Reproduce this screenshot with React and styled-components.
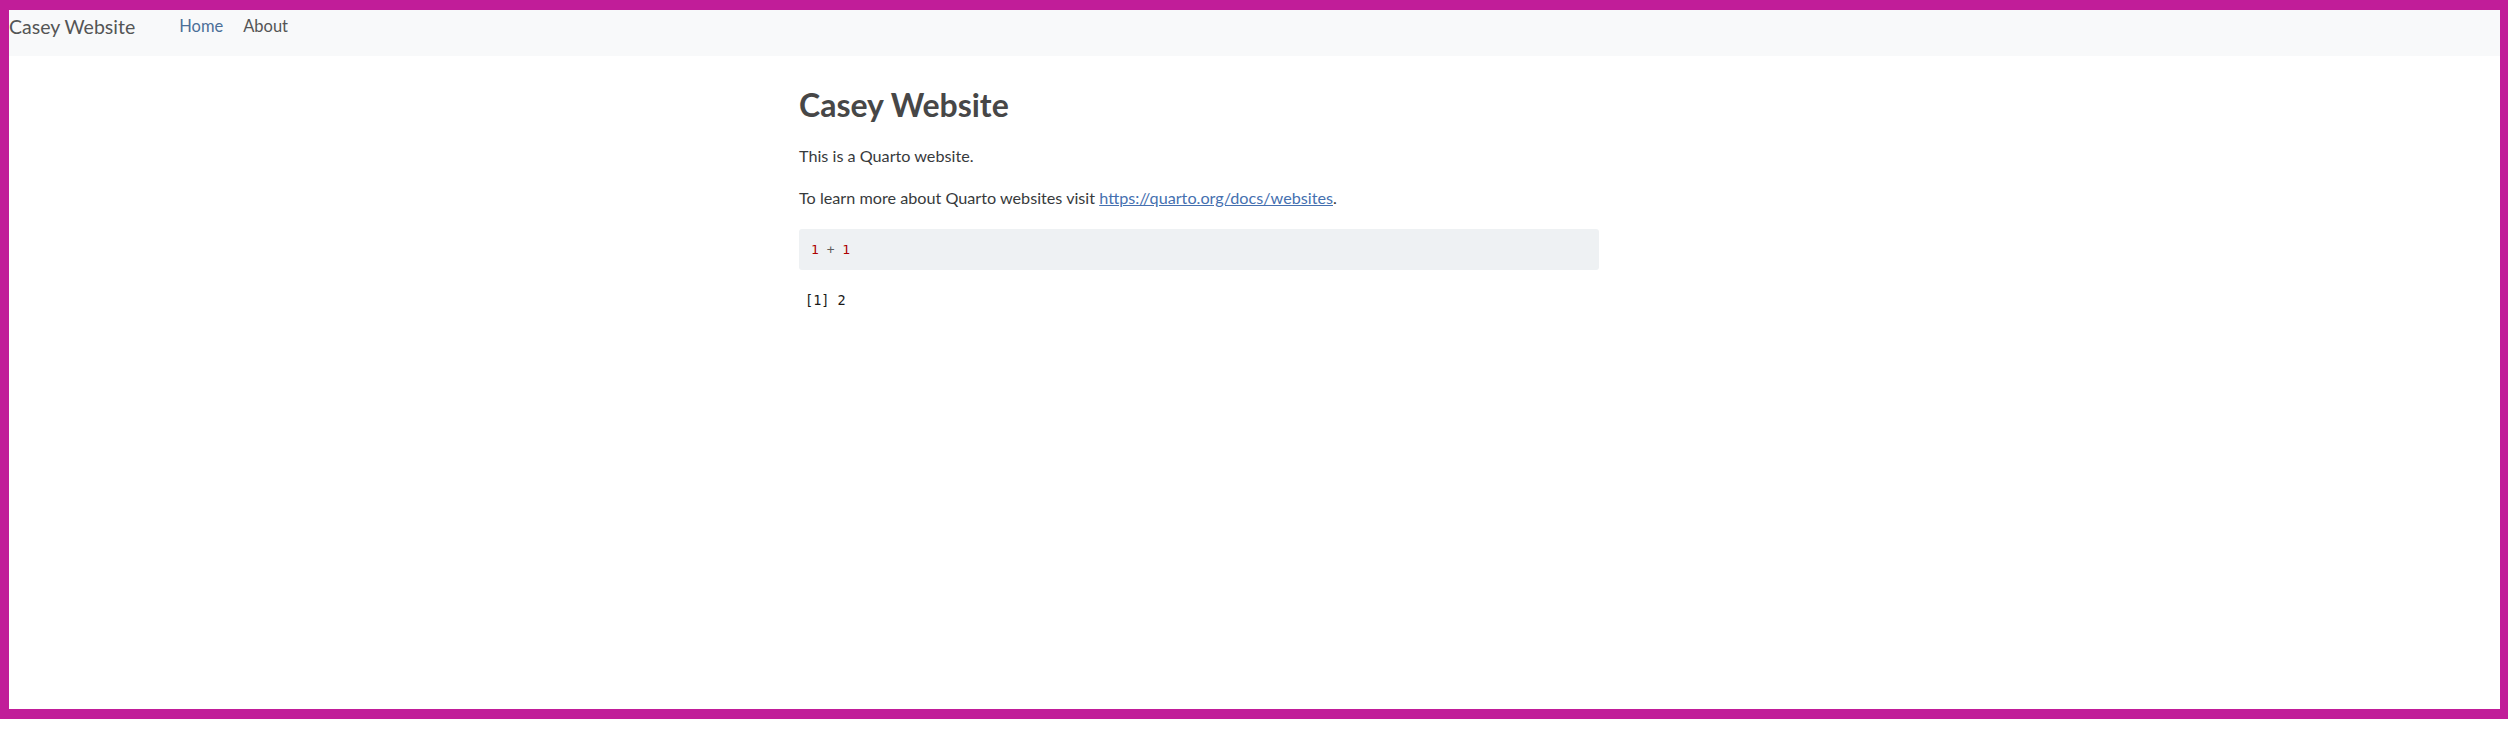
import React from "react";
import styled, { createGlobalStyle } from "styled-components";

const GlobalStyle = createGlobalStyle`
  html, body { margin: 0; padding: 0; background: #ffffff; }
  body { font-family: Lato, "Liberation Sans", sans-serif; color: #373a3c; }
  * { box-sizing: border-box; }
`;

const Frame = styled.div`
  height: 719px;
  border-style: solid;
  border-color: #c11d99;
  border-width: 10px 8px 10px 9px;
  background: #ffffff;
  display: flex;
  flex-direction: column;
`;

const Navbar = styled.nav`
  height: 46px;
  background: #f8f9fa;
  display: flex;
  align-items: flex-start;
  padding-top: 5px;
`;

const Brand = styled.a`
  font-size: 19.5px;
  line-height: 1.2;
  color: #545555;
  text-decoration: none;
  margin-right: 34px;
  white-space: nowrap;
`;

const NavLink = styled.a`
  font-size: 16.5px;
  line-height: 1.4;
  padding: 0 10px;
  color: ${(p) => (p.$active ? "#4b6f98" : "#545555")};
  text-decoration: none;
`;

const Main = styled.main`
  margin-left: 790px;
  width: 800px;
  padding-top: 30px;
`;

const Title = styled.h1`
  font-size: 32px;
  font-weight: 700;
  line-height: 1.2;
  color: #474747;
  margin: 0 0 19px 0;
`;

const Para = styled.p`
  font-size: 16.2px;
  line-height: 1.55;
  margin: 0 0 16px 0;
`;

const Link = styled.a`
  color: #4570b0;
  text-decoration: underline;
`;

const CodeBlock = styled.pre`
  margin: 19px 0 22px 0;
  background: #eef1f3;
  border-radius: 3px;
  padding: 0 12px;
  height: 41px;
  display: flex;
  align-items: center;
  font-family: "DejaVu Sans Mono", "Liberation Mono", monospace;
  font-size: 13px;
`;

const Num = styled.span`
  color: #ad0000;
`;

const Op = styled.span`
  color: #5e5e5e;
`;

const Output = styled.pre`
  margin: 0;
  padding: 0 6px;
  font-family: "DejaVu Sans Mono", "Liberation Mono", monospace;
  font-size: 13.5px;
  color: #1a1a1a;
`;

export default function App() {
  return (
    <>
      <GlobalStyle />
      <Frame>
        <Navbar>
          <Brand href="#">Casey Website</Brand>
          <NavLink href="#" $active>Home</NavLink>
          <NavLink href="#">About</NavLink>
        </Navbar>
        <Main>
          <Title>Casey Website</Title>
          <Para>This is a Quarto website.</Para>
          <Para>
            To learn more about Quarto websites visit{" "}
            <Link href="#">https://quarto.org/docs/websites</Link>.
          </Para>
          <CodeBlock>
            <code>
              <Num>1</Num> <Op>+</Op> <Num>1</Num>
            </code>
          </CodeBlock>
          <Output>[1] 2</Output>
        </Main>
      </Frame>
    </>
  );
}
